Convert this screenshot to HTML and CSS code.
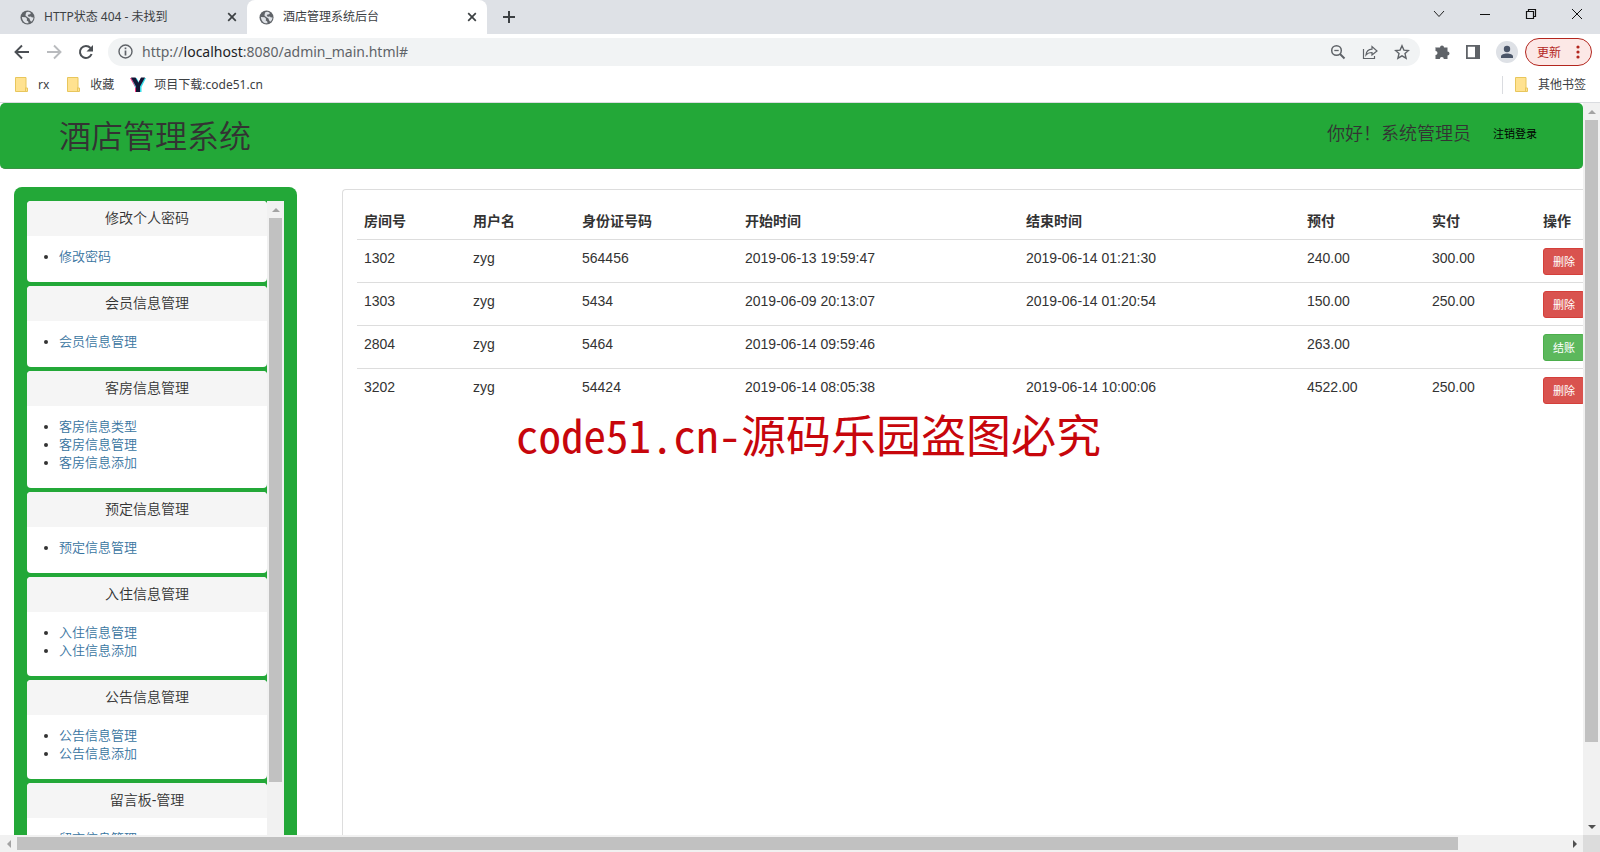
FILE: index.html
```html
<!DOCTYPE html>
<html lang="zh-CN">
<head>
<meta charset="utf-8">
<title>酒店管理系统后台</title>
<link rel="stylesheet" href="styles.css">
</head>
<body>
<svg class="defs" aria-hidden="true">
  <symbol id="globe" viewBox="0 0 16 16"><circle cx="8" cy="8" r="7.5" fill="#5f6368"/><path d="M2 7.5l4 .2 1.500 1.500-.3 2.100 1.600 1 .3 1.900c-3.700.4-6.600-2-7.100-6.700zM7 2l2.500-.2 2.200 1.400-1 1.300-1.700.3-.8 1.700 1.600.8 1.900-.3 1 1.100 1.600-.3c.2 2-1 4-2.500 4.800l-1.100-1.800-.6-1.700-2.500-1.600-1.800-1.700.4-2z" fill="#dee1e6"/></symbol>
  <symbol id="cross" viewBox="0 0 10 10"><path d="M1.200 1.200l7.600 7.600M8.800 1.200L1.200 8.800" stroke="#3c4043" stroke-width="1.700"/></symbol>
  <symbol id="folder" viewBox="0 0 13 15"><path d="M.5.5h10.500v10.500h1.500v3.500H.5z" fill="#ffe290" stroke="#e8c65c"/><path d="M10.500 14v-3.500" stroke="#e8c65c"/></symbol>
</svg>
<header class="browser">
  <div class="tabs">
    <div class="tab"><svg class="i15"><use href="#globe"/></svg><span class="tab-title">HTTP状态 404 - 未找到</span><button class="plain" aria-label="关闭标签页"><svg class="i10"><use href="#cross"/></svg></button></div>
    <div class="tab active"><svg class="i15"><use href="#globe"/></svg><span class="tab-title">酒店管理系统后台</span><button class="plain" aria-label="关闭标签页"><svg class="i10"><use href="#cross"/></svg></button></div>
    <button class="plain new-tab" aria-label="新标签页"><svg class="i14" viewBox="0 0 14 14"><path d="M7 1v12M1 7h12" stroke="#3c4043" stroke-width="2"/></svg></button>
    <div class="window-buttons">
      <button class="plain" aria-label="搜索标签页"><svg class="i12" viewBox="0 0 12 12"><path d="M1 3l5 5.500L11 3" fill="none" stroke="#222"/></svg></button>
      <button class="plain" aria-label="最小化"><svg class="i12" viewBox="0 0 12 12"><path d="M1 6.500h10" stroke="#111"/></svg></button>
      <button class="plain" aria-label="还原"><svg class="i12" viewBox="0 0 12 12"><path d="M1.500 3.500h7v7h-7zM3.500 3.500v-2h7v7h-2" fill="none" stroke="#111" stroke-width="1.200"/></svg></button>
      <button class="plain" aria-label="关闭"><svg class="i12" viewBox="0 0 12 12"><path d="M1 1l10 10M11 1L1 11" stroke="#111"/></svg></button>
    </div>
  </div>
  <div class="toolbar">
    <div class="nav">
      <button class="plain" aria-label="后退"><svg class="i16" viewBox="0 0 16 16"><path d="M15 8H2M8 1.500L1.500 8 8 14.500" fill="none" stroke="#4b4f54" stroke-width="1.900"/></svg></button>
      <button class="plain" aria-label="前进"><svg class="i16" viewBox="0 0 16 16"><path d="M1 8h13M8 1.500L14.500 8 8 14.500" fill="none" stroke="#b9bbbe" stroke-width="1.900"/></svg></button>
      <button class="plain" aria-label="重新加载"><svg class="i16" viewBox="0 0 16 16"><path d="M13.600 10A6 6 0 1 1 12.500 4" fill="none" stroke="#4b4f54" stroke-width="2"/><path d="M15 1v6.500H8.500z" fill="#4b4f54"/></svg></button>
    </div>
    <div class="omnibox">
      <svg class="i15" viewBox="0 0 15 15"><circle cx="7.500" cy="7.500" r="6.500" fill="none" stroke="#5f6368" stroke-width="1.400"/><path d="M7.500 6.500v5M7.500 3.500v1.700" stroke="#5f6368" stroke-width="1.700"/></svg>
      <div class="url">http://<b>localhost</b>:8080/admin_main.html#</div>
      <button class="plain" aria-label="缩放"><svg class="i16" viewBox="0 0 16 16"><circle cx="6.500" cy="6.500" r="4.800" fill="none" stroke="#5f6368" stroke-width="1.500"/><path d="M10 10l4.500 4.500" stroke="#5f6368" stroke-width="1.900"/><path d="M4.300 6.500h4.400" stroke="#5f6368" stroke-width="1.300"/></svg></button>
      <button class="plain" aria-label="分享"><svg class="i16" viewBox="0 0 16 16"><path d="M1.500 5v9.500h11V12M4 11c.3-3.600 2.500-5.600 6-5.800V2.500l5 4.500-5 4V8.500C7.500 8.500 5.500 9 4 11z" fill="none" stroke="#5f6368" stroke-width="1.200"/></svg></button>
      <button class="plain" aria-label="添加书签"><svg class="i16" viewBox="0 0 16 16"><path d="M8 1.800l1.900 4.300 4.600.4-3.500 3.100 1.100 4.600L8 11.800l-4.100 2.400L5 9.600 1.500 6.500l4.600-.4z" fill="none" stroke="#5f6368" stroke-width="1.400"/></svg></button>
    </div>
    <div class="tools">
      <button class="plain" aria-label="扩展程序"><svg class="i16" viewBox="0 0 16 16"><path d="M2 3.500h4a2 2 0 0 1 4 0h3.500v4a2 2 0 0 1 0 4V15H9.800a2 2 0 0 0-4 0H1.500v-4a2 2 0 0 0 0-4v-4z" fill="#5f6368"/></svg></button>
      <button class="plain" aria-label="侧边栏"><svg class="i16" viewBox="0 0 16 16"><path d="M1.900 1.900h12.200v12.200H1.900z" fill="#fff" stroke="#5f6368" stroke-width="1.800"/><path d="M10 2h4v12h-4z" fill="#5f6368"/></svg></button>
      <button class="plain" aria-label="用户"><svg class="i22" viewBox="0 0 22 22"><circle cx="11" cy="11" r="11" fill="#dee1e6"/><circle cx="11" cy="8" r="3.200" fill="#4a5568"/><path d="M5 17v-1.500c0-4 12-4 12 0V17z" fill="#4a5568"/></svg></button>
      <button class="update">更新<svg width="4" height="14" viewBox="0 0 4 14" fill="#b3261e"><circle cx="2" cy="2" r="1.600"/><circle cx="2" cy="7" r="1.600"/><circle cx="2" cy="12" r="1.600"/></svg></button>
    </div>
  </div>
  <nav class="bookmarks">
    <a href="#"><svg class="folder"><use href="#folder"/></svg>rx</a>
    <a href="#"><svg class="folder"><use href="#folder"/></svg>收藏</a>
    <a href="#" class="site"><svg class="i16" viewBox="0 0 16 16"><path d="M0 1h5l3 5 3-5h4l-5 9v5H5v-5z" fill="#f0307a"/><path d="M1.500 1h5l3 5 2-5H16l-4.500 9v5h-4z" fill="#35dce8"/><path d="M1 .5h4.500l3 5.200L11 .5h4l-5 9V15H6V9.500z" fill="#131433"/></svg>项目下载:code51.cn</a>
    <a href="#" class="other"><svg class="folder"><use href="#folder"/></svg>其他书签</a>
  </nav>
</header>
<div class="viewport">
  <div class="page">
    <div class="banner">
      <h1>酒店管理系统</h1>
      <span class="hello">你好！系统管理员</span>
      <a href="#">注销登录</a>
    </div>
    <div class="columns">
      <aside class="sidebar">
        <div class="menu">
          <section><h2>修改个人密码</h2><ul><li><a href="#">修改密码</a></li></ul></section>
          <section><h2>会员信息管理</h2><ul><li><a href="#">会员信息管理</a></li></ul></section>
          <section><h2>客房信息管理</h2><ul><li><a href="#">客房信息类型</a></li><li><a href="#">客房信息管理</a></li><li><a href="#">客房信息添加</a></li></ul></section>
          <section><h2>预定信息管理</h2><ul><li><a href="#">预定信息管理</a></li></ul></section>
          <section><h2>入住信息管理</h2><ul><li><a href="#">入住信息管理</a></li><li><a href="#">入住信息添加</a></li></ul></section>
          <section><h2>公告信息管理</h2><ul><li><a href="#">公告信息管理</a></li><li><a href="#">公告信息添加</a></li></ul></section>
          <section><h2>留言板-管理</h2><ul><li><a href="#">留言信息管理</a></li></ul></section>
        </div>
        <div class="bar vertical inner"><i class="arrow up"></i><i class="thumb"></i></div>
      </aside>
      <main class="content">
        <table>
          <colgroup><col class="c-name"><col class="c-name"><col class="c-id"><col><col><col class="c-pre"><col class="c-paid"><col class="c-action"></colgroup>
          <thead><tr><th>房间号</th><th>用户名</th><th>身份证号码</th><th>开始时间</th><th>结束时间</th><th>预付</th><th>实付</th><th>操作</th></tr></thead>
          <tbody>
            <tr><td>1302</td><td>zyg</td><td>564456</td><td>2019-06-13 19:59:47</td><td>2019-06-14 01:21:30</td><td>240.00</td><td>300.00</td><td><button class="btn danger">删除</button></td></tr>
            <tr><td>1303</td><td>zyg</td><td>5434</td><td>2019-06-09 20:13:07</td><td>2019-06-14 01:20:54</td><td>150.00</td><td>250.00</td><td><button class="btn danger">删除</button></td></tr>
            <tr><td>2804</td><td>zyg</td><td>5464</td><td>2019-06-14 09:59:46</td><td></td><td>263.00</td><td></td><td><button class="btn success">结账</button></td></tr>
            <tr><td>3202</td><td>zyg</td><td>54424</td><td>2019-06-14 08:05:38</td><td>2019-06-14 10:00:06</td><td>4522.00</td><td>250.00</td><td><button class="btn danger">删除</button></td></tr>
          </tbody>
        </table>
        <p class="watermark">code51.cn-源码乐园盗图必究</p>
      </main>
    </div>
  </div>
  <div class="bar vertical outer"><i class="arrow up"></i><i class="thumb"></i><i class="arrow down dark"></i></div>
</div>
<div class="bottom">
  <div class="bar horizontal"><i class="arrow left"></i><i class="thumb"></i><i class="arrow right dark"></i></div>
  <div class="corner"></div>
</div>
</body>
</html>
```
FILE: styles.css
```css
* { box-sizing: border-box; }
html, body { height: 100%; }
body {
  margin: 0;
  display: flex;
  flex-direction: column;
  overflow: hidden;
  background: #fff;
  color: #333;
  font: 14px/20px "Liberation Sans", "Noto Sans CJK SC", sans-serif;
}
a { text-decoration: none; }
svg { display: block; flex: none; }
.defs { position: absolute; width: 0; height: 0; }
.i10 { width: 10px; height: 10px; }
.i12 { width: 12px; height: 12px; }
.i14 { width: 14px; height: 14px; }
.i15 { width: 15px; height: 15px; }
.i16 { width: 16px; height: 16px; }
.i22 { width: 22px; height: 22px; }
.folder { width: 13px; height: 15px; }
.plain { border: 0; padding: 0; background: none; }

/* Browser chrome */
.browser {
  flex: none;
  font: 12px/18px "Noto Sans", "Noto Sans CJK SC", sans-serif;
  border-bottom: 1px solid #dadce0;
}
.tabs { display: flex; height: 34px; background: #dee1e6; }
.tab { display: flex; align-items: center; width: 241px; padding: 0 10px 0 14px; gap: 9px; }
.tab:first-child { margin-left: 6px; }
.tab.active { background: #fff; border-radius: 8px 8px 0 0; width: 240px; padding-left: 12px; }
.tab-title { flex: 1; white-space: nowrap; color: #3c4043; }
.new-tab { margin-left: 15px; }
.window-buttons { display: flex; gap: 34px; margin-left: auto; padding: 0 17px 6px 0; }
.toolbar { display: flex; align-items: center; height: 35px; padding: 0 8px 0 14px; }
.nav { display: flex; gap: 16px; }
.omnibox {
  flex: 1;
  display: flex;
  align-items: center;
  gap: 16px;
  height: 28px;
  margin: 0 14px;
  padding: 0 10px;
  border-radius: 14px;
  background: #f1f3f4;
}
.url { flex: 1; margin-left: -7px; font-size: 14px; color: #5f6368; }
.url b { color: #202124; font-weight: 400; }
.tools { display: flex; align-items: center; gap: 15px; }
.update {
  display: flex;
  align-items: center;
  justify-content: space-between;
  width: 67px;
  height: 28px;
  margin-left: -8px;
  padding: 0 11px;
  border: 1px solid #b3261e;
  border-radius: 14px;
  background: #fce8e6;
  color: #b3261e;
  font: 12px/18px "Noto Sans CJK SC", sans-serif;
}
.bookmarks { display: flex; align-items: center; height: 33px; padding: 0 14px 2px 15px; gap: 18px; }
.bookmarks a { display: flex; align-items: center; gap: 10px; color: #3c4043; }
.bookmarks .site { gap: 8px; margin-left: -2px; }
.bookmarks .other { margin-left: auto; padding-left: 12px; border-left: 1px solid #dadce0; }

/* Page */
.viewport { flex: 1; min-height: 0; display: flex; }
.page { flex: 1; min-width: 0; display: flex; flex-direction: column; overflow: hidden; }
.banner {
  flex: none;
  display: flex;
  align-items: center;
  height: 66px;
  padding: 0 46px 4px 59px;
  border-bottom: 1px solid #3a9345;
  border-radius: 5px;
  background: #23a838;
}
.banner h1 { flex: 1; margin: 6px 0 0; font-size: 32px; line-height: 40px; font-weight: 350; }
.hello { font-size: 18px; font-weight: 350; }
.banner a { margin-left: 22px; color: #000; font-size: 11px; }
.columns { flex: 1; min-height: 0; display: flex; padding: 18px 0 0 14px; gap: 45px; }
.sidebar {
  flex: none;
  display: flex;
  width: 283px;
  padding: 14px 13px 0;
  border-radius: 8px 8px 0 0;
  background: #23a838;
  overflow: hidden;
}
.menu { flex: 1; display: flex; flex-direction: column; gap: 4px; overflow: hidden; }
.menu section { flex: none; border-radius: 4px; background: #fff; overflow: hidden; }
.menu h2 {
  margin: 0;
  padding: 7px 0 8px;
  background: #f5f5f5;
  font-size: 14px;
  line-height: 20px;
  font-weight: 350;
  text-align: center;
}
.menu ul { margin: 0; padding: 12px 0 16px 32px; font-size: 13px; line-height: 18px; }
.menu li { height: 18px; }
.menu a { color: #38749f; font-weight: 350; }
.content {
  flex: 1;
  min-width: 0;
  position: relative;
  margin-top: 2px;
  padding: 14px 0 0 14px;
  border: solid #ddd;
  border-width: 1px 0 0 1px;
  border-radius: 4px 0 0 0;
  overflow: hidden;
}
table { width: 100%; table-layout: fixed; border-collapse: collapse; }
.c-name { width: 109px; }
.c-id { width: 163px; }
.c-pre { width: 125px; }
.c-paid { width: 111px; }
.c-action { width: 47px; }
th { height: 35px; padding: 7px; text-align: left; white-space: nowrap; }
td { height: 42px; padding: 8px 7px 7px; border-top: 1px solid #ddd; vertical-align: top; white-space: nowrap; }
.btn {
  display: block;
  height: 27px;
  padding: 0 9px;
  border: 1px solid;
  border-radius: 3px;
  color: #fff;
  font: 11px/16px "Noto Sans CJK SC", sans-serif;
}
.danger { background: #d9534f; border-color: #d43f3a; }
.success { background: #5cb85c; border-color: #4cae4c; }
.watermark {
  position: absolute;
  top: 216px;
  left: 173px;
  margin: 0;
  color: #c7060c;
  font: 45px/56px "Noto Sans Mono CJK SC", "Noto Sans CJK SC", monospace;
  white-space: nowrap;
}

/* Scrollbars */
.bar { display: flex; flex: none; background: #f1f1f1; }
.vertical { flex-direction: column; align-items: center; width: 17px; }
.horizontal { flex: 1; align-items: center; height: 17px; }
.thumb { background: #c1c1c1; }
.vertical .thumb { width: 13px; }
.horizontal .thumb { width: 91%; height: 13px; }
.outer .thumb { height: 85%; }
.inner .thumb { height: 89%; }
.arrow { flex: none; display: grid; place-items: center; width: 17px; height: 17px; color: #a3a3a3; }
.arrow::before { content: ""; border: 4px solid transparent; }
.up::before { border-top: 0; border-bottom-color: currentColor; }
.down::before { border-bottom: 0; border-top-color: currentColor; }
.left::before { border-left: 0; border-right-color: currentColor; }
.right::before { border-right: 0; border-left-color: currentColor; }
.dark { color: #505050; }
.outer .down { margin-top: auto; }
.horizontal .right { margin-left: auto; }
.bottom { flex: none; display: flex; }
.corner { width: 17px; background: #dcdcdc; }
```
